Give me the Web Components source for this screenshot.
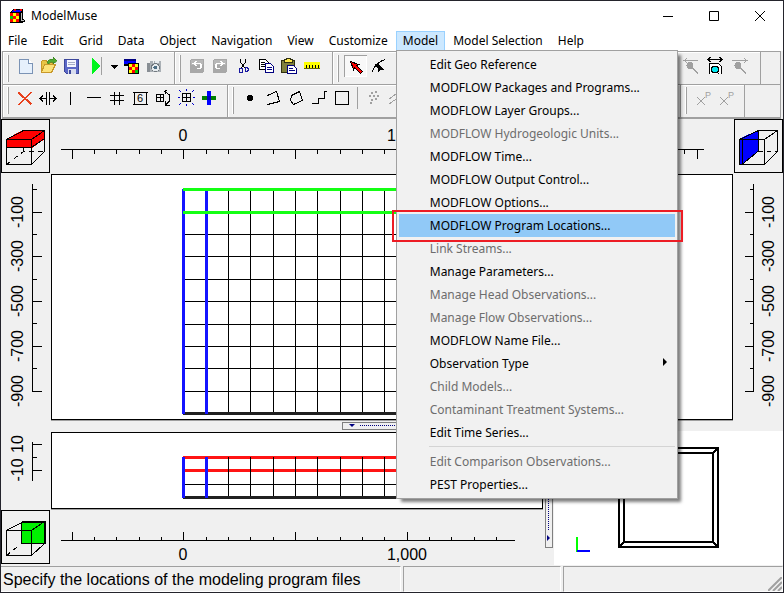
<!DOCTYPE html>
<html lang="en">
<head>
<meta charset="utf-8">
<title>ModelMuse</title>
<style>
html, body { margin: 0; height: 100%; }
body { font: 12px/16px "Noto Sans", "Open Sans", sans-serif; color: #000; background: #f0f0f0; }
</style>
</head>
<body>
<muse-window></muse-window>

<script>
function define(name, html, setup) {
  const template = document.createElement('template');
  template.innerHTML = html;
  customElements.define(name, class extends HTMLElement {
    constructor() {
      super();
      this.attachShadow({ mode: 'open' }).append(template.content.cloneNode(true));
    }
    connectedCallback() { if (setup) setup(this, this.shadowRoot); }
  });
}

/* 23 x 22 toolbar glyphs */
const GLYPHS = {
  new: `<path d="M5.500 4.500h9l4 4v10h-13z" fill="#e6f0fc" stroke="#7b93b5"/><path d="M14.500 4.500v4h4" fill="#fff" stroke="#7b93b5"/>`,
  open: `<path d="M4.500 17.500v-11l1-1h4l1 2h5v3" fill="#e8c547" stroke="#c8982a"/><path d="M4.500 17.500l3-8h11l-4 8z" fill="#fce27a" stroke="#c8982a"/><path d="M10 8c1-4 4-4 6-4V2l4 4-4 3V7c-2 0-3 0-4 2z" fill="#52a832" stroke="#39801f" stroke-width=".6"/>`,
  save: `<path d="M4.500 4.500h14v14h-12l-2-2z" fill="#5b68c7" stroke="#3d479b"/><path d="M7 5h9v7H7z" fill="#f4f6ff"/><path d="M8 7.500h7M8 9.500h7" stroke="#a4acc8"/><path d="M8 14h8v5H8z" fill="#d9ddef"/><path d="M9 15h2v4H9z" fill="#3d479b"/>`,
  play: `<path d="M9 3l8 8-8 8z" fill="#00f51c"/><path d="M18.500 2v18" stroke="#a0a0a0"/>`,
  drop: `<path d="M9 10h7v1H9zM10 11h5v1h-5zM11 12h3v1h-3zM12 13h1v1h-1z" fill="#000"/>`,
  model: `<path d="M4 4h12v5H4z" fill="#00f"/><path d="M4 4h12v2H4z" fill="#000080"/><path d="M4 9h5v2H4z" fill="#000"/><path d="M8 8h11v11H8z" fill="#000"/><path d="M9 9h3v3H9zM15 9h3v3h-3zM12 12h3v3h-3zM9 15h3v3H9z" fill="#ff0"/><path d="M12 9h3v3h-3zM15 12h3v3h-3z" fill="#f00"/><path d="M9 12h3v3H9zM12 15h3v3h-3z" fill="#f00"/><path d="M15 15h3v3h-3z" fill="#0c0"/>`,
  camera: `<path d="M4 8h3V6h3v2h1V6h7v11H4z" fill="#aab0b5"/><path d="M4 8h3v9H4z" fill="#888e94"/><path d="M12 6h4v2h-4z" fill="#e8ecef"/><circle cx="12.500" cy="12.500" r="4" fill="#e6ebee" stroke="#72797f"/><circle cx="12.500" cy="12.500" r="2" fill="#4d6e84"/>`,
  undo: `<rect x="4" y="4" width="14" height="14" rx="2" fill="#a8a8a8"/><path d="M5 5h12v5H5z" fill="#b8b8b8"/><path d="M8 8.500h5c3 0 3 5 0 5h-2M10.500 6l-3 2.500 3 2.500" fill="none" stroke="#fff" stroke-width="1.500"/>`,
  redo: `<rect x="4" y="4" width="14" height="14" rx="2" fill="#a8a8a8"/><path d="M5 5h12v5H5z" fill="#b8b8b8"/><path d="M14 8.500H9c-3 0-3 5 0 5h2M11.500 6l3 2.500-3 2.500" fill="none" stroke="#fff" stroke-width="1.500"/>`,
  cut: `<path d="M8.500 4v3l5 7M13.500 4v3l-5 7" fill="none" stroke="#000"/><path d="M8 13.500h2v4H8l-1-1v-2zM13 12.500h2l1 1v2l-1 1h-2z" fill="none" stroke="#1818a0"/>`,
  copy: `<path d="M4.500 4.500h6l3 3v7h-9z" fill="#fff" stroke="#000"/><path d="M6 7.500h4M6 9.500h4M6 11.500h4" stroke="#000"/><path d="M10.500 8.500h5l3 3v6h-8z" fill="#fff" stroke="#000080"/><path d="M12 12.500h5M12 14.500h5" stroke="#000080"/>`,
  paste: `<path d="M3.500 5.500h13v12h-13z" fill="#80803c" stroke="#303010"/><path d="M6 7.500h8v-3h-2v-1H8v1H6z" fill="#ffe94a" stroke="#303010"/><path d="M9.500 10.500h6l3 3v5h-9z" fill="#fff" stroke="#000080"/><path d="M11 13.500h4M11 15.500h6" stroke="#000080"/>`,
  ruler: `<path d="M3 7h16v7H3z" fill="#ff0"/><path d="M3 13.500h16" stroke="#606000"/><path d="M5.500 10v3M8.500 10v3M11.500 10v3M14.500 10v3M17.500 10v3" stroke="#000"/>`,
  pointer: `<path d="M6.500 6.500l8 3-2 1 6 6-2 2-6-6-1 2z" fill="#f00" stroke="#000"/>`,
  node: `<path d="M5 17c2-6 5-10 13-12.500" fill="none" stroke="#000"/><path d="M7.500 8.500h3v3h-3z" fill="#000"/><path d="M10 8l7 7h-4l-2 3z" fill="#000"/>`,
  zoomPrev: `<path d="M1 5.500h14M4 3.500l-3 2 3 2" fill="none" stroke="#a0a0a0"/><circle cx="7" cy="10.500" r="3.500" fill="#a0a0a0"/><path d="M9 12.500l6 6" stroke="#a0a0a0" stroke-width="2"/>`,
  extent: `<path d="M2 4.500h14M4.500 2L2 4.500 4.500 7M13.500 2L16 4.500 13.500 7" fill="none" stroke="#000"/><path d="M3.500 19V8.500h9l3 3V19" fill="#fff" stroke="#000"/><circle cx="9" cy="14.500" r="3.500" fill="#00e8f0" stroke="#000"/><path d="M11 17l2 2" stroke="#000"/>`,
  zoomNext: `<path d="M3 5.500h15M15 3.500l3 2-3 2" fill="none" stroke="#a0a0a0"/><circle cx="9" cy="10.500" r="3.500" fill="#a0a0a0"/><path d="M11 12.500l6 6" stroke="#a0a0a0" stroke-width="2"/>`,
  delete: `<path d="M4.500 5.500l13 12M17.500 5l-13 13" stroke="#e8401c" stroke-width="2" fill="none"/>`,
  moveLine: `<path d="M9.500 5v13M12.500 5v13M3 11.500h6M13 11.500h6M6 8.500l-3 3 3 3M16 8.500l3 3-3 3" stroke="#000" fill="none"/>`,
  vline: `<path d="M10.500 5v13" stroke="#000"/>`,
  hline: `<path d="M4 10.500h14" stroke="#000"/>`,
  hash: `<path d="M8.500 5v13M13.500 5v13M4 8.500h14M4 13.500h14" stroke="#000"/>`,
  six: `<path d="M5.500 5.500h12v12h-12zM4 5.500h1M18 5.500h1M4 17.500h1M18 17.500h1" fill="none" stroke="#000"/><text x="8" y="15" font-size="11" font-family="Liberation Sans">6</text>`,
  rotate: `<path d="M4.500 7.500h7v7h-7zM8.500 7v7M4 10.500h7" fill="none" stroke="#000"/><path d="M13 4.500l4 3v7l-3 3M15.500 2.500l-3 2 2 3M13.500 14v4h4" fill="none" stroke="#000"/>`,
  smooth: `<path d="M7.500 6.500h8v8h-8zM11.500 6v9M7 10.500h9" fill="none" stroke="#000"/><path d="M4 3l2 2M19 3l-2 2M4 18l2-2M19 18l-2-2M11.500 2v2M11.500 17v2M3 10.500h2M18 10.500h2" stroke="#00c"/>`,
  plus: `<path d="M9 4h4v14H9z" fill="#00f"/><path d="M4 9h14v4H4z" fill="#008000"/><path d="M9 9h4v4H9z" fill="#0000c0"/>`,
  point: `<circle cx="11" cy="11" r="3" fill="#000"/>`,
  polyline: `<path d="M5.500 8.500l9-4 3 10-12 3" fill="none" stroke="#000"/>`,
  polygon: `<path d="M6.500 8.500l8-4 3 9-9 4-3-4z" fill="none" stroke="#000"/>`,
  steps: `<path d="M4 16.500h6v-5h6v-7h3" fill="none" stroke="#000"/>`,
  rect: `<path d="M4.500 4.500h13v13h-13z" fill="none" stroke="#000"/>`,
  dots: `<path d="M9 5h2v2H9zM13 4h2v2h-2zM7 8h2v2H7zM11 8h2v2h-2zM15 8h2v2h-2zM9 12h2v2H9zM13 11h2v2h-2zM8 15h2v2H8z" fill="#a0a0a0"/>`,
  lines: `<path d="M4 12l7-5M4 17l10-7" stroke="#a0a0a0"/>`,
  xp: `<path d="M5 10l8 8M13 10l-8 8" stroke="#a0a0a0"/><text x="13" y="11" font-size="9" font-family="Liberation Sans" fill="#a0a0a0">P</text>`
};

define('tool-button', `
<style>
:host { display: block; flex: none; width: 23px; height: 22px; }
:host([narrow]) { width: 14px; }
button { all: unset; display: block; box-sizing: border-box; width: 100%; height: 100%; }
:host([pressed]) button { background: #f8f8f8; box-shadow: inset 1px 1px #a0a0a0, inset -1px -1px #fff; }
svg { display: block; width: 100%; height: 100%; shape-rendering: crispEdges; overflow: hidden; }
</style>
<button type="button"><svg viewBox="0 0 23 22" preserveAspectRatio="xMidYMid slice"></svg></button>`,
(host, root) => {
  root.querySelector('svg').innerHTML = GLYPHS[host.getAttribute('glyph')];
  root.querySelector('button').setAttribute('aria-label', host.getAttribute('label'));
  if (host.hasAttribute('pressed')) root.querySelector('button').setAttribute('aria-pressed', 'true');
});

define('tool-bar', `
<style>
:host { display: flex; align-items: flex-start; flex: none; box-sizing: border-box; padding: var(--bar-top) var(--bar-end) 0 4px; border-right: 1px solid #a0a0a0; box-shadow: inset 1px 1px #fff; }
:host([grow]) { flex: 1; }
i { flex: none; box-sizing: border-box; width: 2px; height: 27px; margin-right: 5px; background: #fff; border-right: 1px solid #a0a0a0; }
</style><i></i><slot></slot>`);

define('tool-area', `
<style>
:host { display: grid; grid-template-rows: 32px 33px; margin: 0 2px 0 1px; border: 1px solid #a0a0a0; border-bottom-width: 2px; background: #f0f0f0; }
div { display: flex; align-items: stretch; min-width: 0; }
.one { --bar-end: 8px; --bar-top: 3px; padding-right: 19px; }
.two { --bar-end: 6px; --bar-top: 2px; padding-right: 35px; border-top: 1px solid #a0a0a0; }
.push { margin-left: auto; display: flex; padding: 0; }
hr { flex: none; width: 1px; height: 22px; margin: 0 4px 0 3px; border: 0; background: #a0a0a0; }
</style>
<div class="one">
<tool-bar>
<tool-button glyph="new" label="New"></tool-button><tool-button glyph="open" label="Open"></tool-button><tool-button glyph="save" label="Save"></tool-button><tool-button glyph="play" label="Run model"></tool-button><tool-button narrow glyph="drop" label="Run options"></tool-button><tool-button glyph="model" label="Import results"></tool-button><tool-button glyph="camera" label="Export image"></tool-button>
</tool-bar>
<tool-bar>
<tool-button glyph="undo" label="Undo"></tool-button><tool-button glyph="redo" label="Redo"></tool-button><tool-button glyph="cut" label="Cut"></tool-button><tool-button glyph="copy" label="Copy"></tool-button><tool-button glyph="paste" label="Paste"></tool-button><tool-button glyph="ruler" label="Measure"></tool-button>
</tool-bar>
<tool-bar grow>
<tool-button pressed glyph="pointer" label="Select objects"></tool-button><tool-button glyph="node" label="Select vertices"></tool-button>
<div class="push"><tool-button glyph="zoomPrev" label="Previous view"></tool-button><tool-button glyph="extent" label="Zoom to extent"></tool-button><tool-button glyph="zoomNext" label="Next view"></tool-button></div>
</tool-bar>
</div>
<div class="two">
<tool-bar>
<tool-button glyph="delete" label="Delete grid line"></tool-button><tool-button glyph="moveLine" label="Move grid line"></tool-button><tool-button glyph="vline" label="Add vertical line"></tool-button><tool-button glyph="hline" label="Add horizontal line"></tool-button><tool-button glyph="hash" label="Subdivide"></tool-button><tool-button glyph="six" label="Set widths"></tool-button><tool-button glyph="rotate" label="Rotate grid"></tool-button><tool-button glyph="smooth" label="Smooth grid"></tool-button><tool-button glyph="plus" label="Generate grid"></tool-button>
</tool-bar>
<tool-bar grow>
<tool-button glyph="point" label="Point"></tool-button><tool-button glyph="polyline" label="Polyline"></tool-button><tool-button glyph="polygon" label="Polygon"></tool-button><tool-button glyph="steps" label="Straight line"></tool-button><tool-button glyph="rect" label="Rectangle"></tool-button><hr><tool-button glyph="dots" label="Point section"></tool-button><tool-button glyph="lines" label="Line section"></tool-button>
</tool-bar>
<tool-bar>
<tool-button glyph="xp" label="Vertex value"></tool-button><tool-button glyph="xp" label="Parameter value"></tool-button>
</tool-bar>
</div>`);

define('title-bar', `
<style>
:host { display: flex; align-items: center; height: 30px; background: #fff; padding-left: 8px; }
.mark { width: 17px; height: 16px; margin-right: 5px; shape-rendering: crispEdges; }
span { flex: 1; }
button { all: unset; width: 46px; height: 30px; display: grid; place-items: center; }
button svg { width: 12px; height: 12px; }
</style>
<svg class="mark" viewBox="0 0 17 16"><path d="M1 4l4-3h9v10l3 2-4 2H1z" fill="#000"/><path d="M4 2h9l-2 2H3z" fill="#00f"/><path d="M5 1h2v2H5zM11 1h2v2h-2z" fill="#f00"/><path d="M1 5h3v3H1zM7 5h3v3H7zM4 8h3v3H4zM1 11h3v3H1zM7 11h3v3H7z" fill="#f00"/><path d="M4 5h3v3H4zM7 8h3v3H7zM4 11h3v3H4z" fill="#ff0"/><path d="M1 8h3v3H1z" fill="#0c0"/><path d="M12 5v7l3 1" stroke="#bbb" fill="none"/></svg>
<span>ModelMuse</span>
<button aria-label="Minimize"><svg viewBox="0 0 12 12"><path d="M1 6.500h10" stroke="#000"/></svg></button>
<button aria-label="Maximize"><svg viewBox="0 0 12 12"><path d="M1.500 1.500h9v9h-9z" fill="none" stroke="#000"/></svg></button>
<button aria-label="Close"><svg viewBox="0 0 12 12"><path d="M1 1l10 10M11 1L1 11" stroke="#000"/></svg></button>`);

define('menu-row', `
<style>
:host { display: block; }
button { all: unset; box-sizing: border-box; display: flex; align-items: center; width: 100%; height: 23px; padding: 0 8px 0 31px; white-space: nowrap; }
button:disabled { color: #6d6d6d; }
:host([active]) button { background: #91c9f7; }
:host([more]) button::after { content: ""; margin-left: auto; margin-bottom: 4px; border: 4px solid transparent; border-left-color: #000; border-right: 0; }
</style><button type="button" role="menuitem"><slot></slot></button>`,
(host, root) => { root.querySelector('button').disabled = host.hasAttribute('off'); });

define('menu-panel', `
<style>
:host { display: block; box-sizing: border-box; width: 282px; padding: 2px; border: 1px solid #a0a0a0; background: #f1f1f1; box-shadow: 4px 4px 3px -1px rgba(0,0,0,.5); }
hr { margin: 2px 0 3px 30px; border: 0; height: 1px; background: #d4d4d4; }
.marked { position: relative; }
.marked::after { content: ""; position: absolute; inset: -4px -8px -5px -7px; border: 2px solid #ed1c24; pointer-events: none; }
</style>
<menu-row>Edit Geo Reference</menu-row>
<menu-row>MODFLOW Packages and Programs...</menu-row>
<menu-row>MODFLOW Layer Groups...</menu-row>
<menu-row off>MODFLOW Hydrogeologic Units...</menu-row>
<menu-row>MODFLOW Time...</menu-row>
<menu-row>MODFLOW Output Control...</menu-row>
<menu-row>MODFLOW Options...</menu-row>
<div class="marked"><menu-row active>MODFLOW Program Locations...</menu-row></div>
<menu-row off>Link Streams...</menu-row>
<menu-row>Manage Parameters...</menu-row>
<menu-row off>Manage Head Observations...</menu-row>
<menu-row off>Manage Flow Observations...</menu-row>
<menu-row>MODFLOW Name File...</menu-row>
<menu-row more>Observation Type</menu-row>
<menu-row off>Child Models...</menu-row>
<menu-row off>Contaminant Treatment Systems...</menu-row>
<menu-row>Edit Time Series...</menu-row>
<hr>
<menu-row off>Edit Comparison Observations...</menu-row>
<menu-row>PEST Properties...</menu-row>`);

define('menu-item', `
<style>
:host { position: relative; display: block; }
button { all: unset; box-sizing: border-box; display: block; height: 20px; padding: 2px 7px; white-space: nowrap; }
:host([open]) button { background: #cce8ff; box-shadow: inset 0 0 0 1px #99d1ff; }
::slotted(menu-panel) { position: absolute; z-index: 10; top: 19px; left: 0; }
</style>
<button type="button"></button><slot></slot>`,
(host, root) => { root.querySelector('button').textContent = host.getAttribute('label'); });

define('menu-bar', `
<style>:host { display: flex; gap: 1px; height: 20px; background: #fff; }</style>
<menu-item label="File"></menu-item><menu-item label="Edit"></menu-item><menu-item label="Grid"></menu-item><menu-item label="Data"></menu-item><menu-item label="Object"></menu-item><menu-item label="Navigation"></menu-item><menu-item label="View"></menu-item><menu-item label="Customize"></menu-item><menu-item open label="Model"><menu-panel></menu-panel></menu-item><menu-item label="Model Selection"></menu-item><menu-item label="Help"></menu-item>`);

/* Axis with ticks. side: where the ticks point; at: axis offset; major / minor: positions; labels: "position:text" list */
define('axis-ruler', `
<style>
:host { display: block; min-width: 0; min-height: 0; overflow: hidden; }
svg { display: block; width: 100%; height: 100%; font: 16px "Liberation Sans", sans-serif; }
path { stroke: #000; fill: none; shape-rendering: crispEdges; }
</style><svg></svg>`,
(host, root) => {
  const get = n => (host.getAttribute(n) || '').split(' ').filter(Boolean);
  const side = host.getAttribute('side');
  const flat = side === 'up' || side === 'down';
  const sign = side === 'down' || side === 'right' ? 1 : -1;
  const at = +host.getAttribute('at') + 0.5;
  const [from, to] = get('span').map(Number);
  let d = flat ? `M${from} ${at}H${to}` : `M${at} ${from}V${to}`;
  const tick = (p, n) => { p = +p + 0.5; d += flat ? `M${p} ${at}v${n * sign}` : `M${at} ${p}h${n * sign}`; };
  get('major').forEach(p => tick(p, 9));
  get('minor').forEach(p => tick(p, 4));
  const base = +host.getAttribute('base');
  const texts = get('labels').map(s => {
    const [p, t] = s.split(':');
    return flat ? `<text x="${p}" y="${base}" text-anchor="middle">${t}</text>`
                : `<text transform="translate(${base} ${p}) rotate(-90)" text-anchor="middle">${t}</text>`;
  }).join('');
  root.querySelector('svg').innerHTML = `<path d="${d}"/>${texts}`;
});

const CUBES = {
  top: `<path d="M5 20l17-9h22v9l-13 9H5z" fill="#f00"/><path d="M5.500 20.500h25v25h-25zM5.500 20.500l17-9h21l-13 9M43.500 11.500v21l-13 13M5.500 28.500h25l13-9" fill="none" stroke="#000"/><path d="M5.500 45.500l17-13h21" fill="none" stroke="#000" stroke-dasharray="5 4"/><path d="M22.500 29v4" stroke="#000"/>`,
  front: `<path d="M21 12h23v22H21z" fill="#00f000"/><path d="M5.500 20.500h25v25h-25zM5.500 20.500l17-9h21l-13 9M43.500 11.500v22l-13 12M20.500 12v21.500h23" fill="none" stroke="#000"/><path d="M21 11.500h22.500v22" fill="none" stroke="#000" stroke-width="2"/><path d="M5.500 45.500l15-12" stroke="#000" stroke-dasharray="5 4"/>`,
  side: `<path d="M5 20l19-9v22L8 46H5z" fill="#00f"/><path d="M5.500 20.500h25v25h-25zM5.500 20.500l19-9h19l-13 9M43.500 11.500v21l-13 13M8.500 21v24l16-13v-20" fill="none" stroke="#000"/><path d="M24.500 32.500h19" stroke="#000" stroke-dasharray="4 4"/>`
};
define('cube-face', `
<style>
:host { display: block; box-sizing: border-box; width: 49px; height: 54px; border: 1px solid #000; }
svg { display: block; width: 49px; height: 54px; margin: -1px; shape-rendering: crispEdges; }
</style><svg viewBox="0 0 49 54"></svg>`,
(host, root) => { root.querySelector('svg').innerHTML = CUBES[host.getAttribute('face')]; });

const COLS = [155, 177, 199, 222, 244, 266, 289, 311, 333];
define('grid-view', `
<style>
:host { display: block; box-sizing: border-box; min-width: 0; min-height: 0; overflow: hidden; background: #fff; border: 1px solid #000; box-shadow: 0 1px #a0a0a0; }
svg { display: block; width: 100%; height: 100%; shape-rendering: crispEdges; }
</style><svg></svg>`,
(host, root) => {
  const rows = host.getAttribute('rows').split(' ').map(Number);
  const lead = host.getAttribute('lead');
  const top = rows[0], second = rows[1], end = rows[rows.length - 1];
  const thin = COLS.slice(1).concat(355).map(x => `M${x - .5} ${top}V${end}`).join('') +
               rows.slice(2, -1).map(y => `M131 ${y + .5}H355`).join('');
  const accent = `<path d="M131 ${top + .5}H355M131 ${second + .5}H355" stroke="${lead}" stroke-width="3"/>`;
  const blue = `<path d="M131.500 ${top}V${end + 1}M154.500 ${top}V${end + 1}" stroke="#1414ff" stroke-width="3"/>`;
  const black = `<path d="${thin}" stroke="#000"/>`;
  const foot = `<path d="M131 ${end + .5}H355" stroke="#202020" stroke-width="3"/>`;
  root.querySelector('svg').innerHTML =
    (host.hasAttribute('section') ? accent + black + foot + blue : black + foot + blue + accent);
});

define('pane-splitter', `
<style>
:host { display: flex; align-items: center; justify-content: center; }
div { box-sizing: border-box; display: flex; align-items: center; gap: 5px; width: 100px; height: 8px; padding: 0 6px; border: 1px solid #808080; background: #f0f0f0; }
i { border: 3px solid transparent; border-top-color: #000080; border-bottom: 0; }
b { flex: 1; border-top: 1px dotted #000080; }
:host([vertical]) div { flex-direction: column-reverse; width: 8px; height: 100px; padding: 6px 0; }
:host([vertical]) i { border: 3px solid transparent; border-left-color: #000080; border-right: 0; }
:host([vertical]) b { border-top: 0; border-left: 1px dotted #000080; }
</style><div><i></i><b></b></div>`);

define('solid-view', `
<style>
:host { display: grid; place-items: center; background: #fff; }
svg { width: 229px; height: 134px; shape-rendering: crispEdges; }
</style>
<svg viewBox="0 0 229 134"><path d="M65 17h99v99H65zM70 22h89v89H70zM65 17l5 5M164 17l-5 5M65 116l5-5M164 116l-5-5" fill="none" stroke="#000" stroke-width="2"/><path d="M23 106v15" stroke="#0f0" stroke-width="2"/><path d="M23 120h13" stroke="#00f" stroke-width="2"/></svg>`);

define('status-bar', `
<style>
:host { display: grid; grid-template-columns: 400fr 158fr 220fr; gap: 2px; height: 27px; box-sizing: border-box; padding-top: 1px; background: #f0f0f0; font: 16px/25px "Liberation Sans", sans-serif; }
div { box-sizing: border-box; min-width: 0; padding-left: 2px; border-top: 1px solid #a0a0a0; border-right: 1px solid #fff; border-bottom: 1px solid #fff; white-space: nowrap; overflow: hidden; }
div + div { border-left: 1px solid #a0a0a0; }
.last { display: flex; justify-content: flex-end; align-items: flex-end; }
svg { width: 14px; height: 14px; }
</style>
<div>Specify the locations of the modeling program files</div><div></div>
<div class="last"><svg viewBox="0 0 14 14"><path d="M0 14L14 0M5 14l9-9M10 14l4-4" stroke="#a0a0a0" stroke-width="2"/></svg></div>`);

define('muse-window', `
<style>
:host { display: flex; flex-direction: column; box-sizing: border-box; min-height: 100vh; border: 1px solid #24242c; background: #f0f0f0; }
.plan { flex: 1; display: grid; grid-template: 55px minmax(0, 1fr) / 50px minmax(0, 1fr) 50px; }
.plan cube-face[face=side] { justify-self: end; }
.plan axis-ruler[side=down] { grid-column: 2; }
.lower { display: flex; height: 134px; }
.section { flex: 1; min-width: 0; display: grid; grid-template: 77px minmax(0, 1fr) / 50px minmax(0, 1fr); padding-top: 1px; }
.section cube-face { margin-top: 1px; }
pane-splitter { height: 11px; }
pane-splitter[vertical] { width: 11px; height: auto; }
solid-view { flex: none; width: 229px; }
</style>
<title-bar></title-bar>
<menu-bar></menu-bar>
<tool-area></tool-area>
<div class="plan">
<cube-face face="top"></cube-face>
<axis-ruler side="down" at="30" base="22" span="10 653" major="21 132 244 356 467 579 646" minor="43 65 88 110 155 177 199 222 266 289 311 333 378 400 423 445 490 512 534 557 601 624 633" labels="132:0 356:1,000"></axis-ruler>
<cube-face face="side"></cube-face>
<axis-ruler side="right" at="31" base="22" span="10 218" major="38 82 127 172 217" minor="15 60 105 149 194" labels="38:-100 82:-300 127:-500 172:-700 217:-900"></axis-ruler>
<grid-view lead="#14ff14" rows="14 37 59 81 104 126 149 171 193 216 238"></grid-view>
<axis-ruler side="left" at="20" base="41" span="10 218" major="38 82 127 172 217" minor="15 60 105 149 194" labels="38:-100 82:-300 127:-500 172:-700 217:-900"></axis-ruler>
</div>
<pane-splitter></pane-splitter>
<div class="lower">
<div class="section">
<axis-ruler side="right" at="31" base="22" span="10 49" major="12 38" minor="25" labels="12:10 38:-10"></axis-ruler>
<grid-view section lead="#ff1414" rows="24 37 51 64"></grid-view>
<cube-face face="front"></cube-face>
<axis-ruler side="up" at="31" base="51" span="10 464" major="21 132 244 356" minor="43 65 88 110 155 177 199 222 266 289 311 333 378 400 423 445" labels="132:0 356:1,000"></axis-ruler>
</div>
<pane-splitter vertical></pane-splitter>
<solid-view></solid-view>
</div>
<status-bar></status-bar>`);
</script>
</body>
</html>
